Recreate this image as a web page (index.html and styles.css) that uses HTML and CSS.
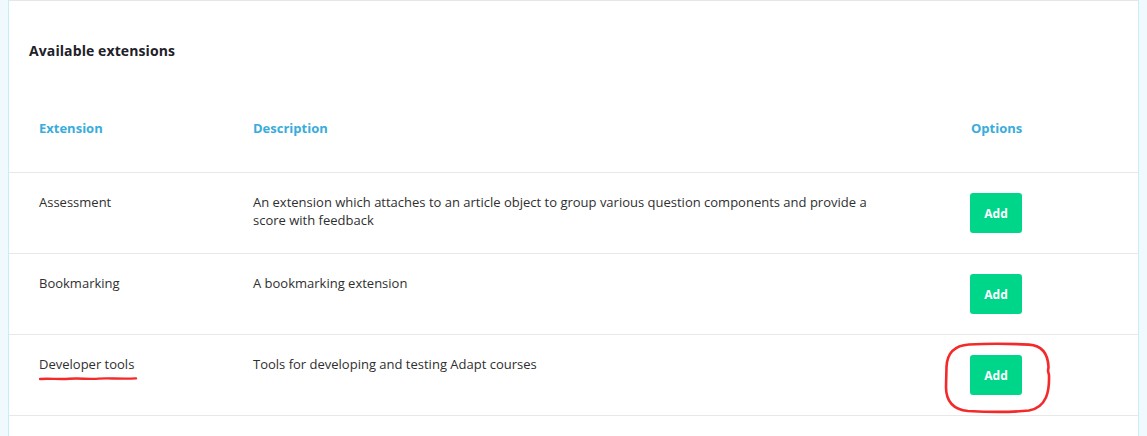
FILE: index.html
```html
<!DOCTYPE html>
<html lang="en">
<head>
<meta charset="utf-8">
<title>Available extensions</title>
<link rel="stylesheet" href="styles.css">
</head>
<body>
<div class="panel">
  <h2 class="title">Available extensions</h2>
  <div class="table">
    <div class="row head">
      <div class="c1">Extension</div>
      <div class="c2">Description</div>
      <div class="c3">Options</div>
    </div>
    <div class="row">
      <div class="c1">Assessment</div>
      <div class="c2"><p class="desc">An extension which attaches to an article object to group various question components and provide a score with feedback</p></div>
      <div class="c3"><button class="add">Add</button></div>
    </div>
    <div class="row">
      <div class="c1">Bookmarking</div>
      <div class="c2"><p class="desc">A bookmarking extension</p></div>
      <div class="c3"><button class="add">Add</button></div>
    </div>
    <div class="row">
      <div class="c1">Developer tools</div>
      <div class="c2"><p class="desc">Tools for developing and testing Adapt courses</p></div>
      <div class="c3"><button class="add">Add</button></div>
    </div>
  </div>
  <svg class="mark-underline" width="100" height="8" viewBox="0 0 100 8">
    <path d="M1 4 C10 3.2, 20 4.6, 30 3.8 S50 4.4, 60 3.6 S80 4.3, 97 3.4" />
  </svg>
  <svg class="mark-circle" width="110" height="74" viewBox="0 0 110 74">
    <path d="M26 3.5 C45 2.5, 70 2.8, 86 3.6 C98 4.5, 105 12, 105.5 26 L105 30 L106 34 C106.5 50, 104 66, 86 69.5 C66 71.5, 44 71, 25 70 C10 68.5, 3 60, 3 46 L3.5 26 C4 12, 11 4.5, 26 3.5 Z" />
  </svg>
</div>
</body>
</html>
```

FILE: styles.css
```css
* { box-sizing: border-box; }
html, body { margin: 0; padding: 0; }
body {
  background: #f0fafe;
  font-family: "Open Sans", "Noto Sans", "DejaVu Sans", sans-serif;
  color: #333;
  height: 436px;
  overflow: hidden;
}
.panel {
  position: relative;
  margin-left: 8px;
  width: 1131px;
  height: 436px;
  background: #fff;
  border-left: 1px solid #c8ecf8;
  border-right: 1px solid #c8ecf8;
  border-top: 1px solid #e6e6e6;
}
.title {
  margin: 0;
  padding: 40px 0 0 20px;
  font-size: 14px;
  line-height: 20px;
  font-weight: 700;
  letter-spacing: 0.1px;
  color: #1e2128;
}
.row {
  display: grid;
  grid-template-columns: 214px 717px 1fr;
  padding: 20px 0 20px 30px;
  border-bottom: 1px solid #e8e8e8;
  height: 81px;
  font-size: 13px;
  line-height: 18px;
}
.row.head {
  height: auto;
  padding-top: 58px;
  padding-bottom: 35px;
  font-weight: 700;
  color: #39acdb;
}
.head .c3 { padding-left: 1px; }
.desc {
  margin: 0;
  max-width: 630px;
  color: #2f2f2f;
}
.c1 { color: #2f2f2f; }
.head .c1 { color: #39acdb; }
.add {
  display: block;
  width: 52px;
  height: 40px;
  border: none;
  border-radius: 3px;
  background: #00d68a;
  color: #fff;
  font-family: "Open Sans", "Noto Sans", sans-serif;
  font-weight: 700;
  font-size: 12px;
  padding: 0;
  cursor: pointer;
}
.mark-underline {
  position: absolute;
  left: 30px;
  top: 374px;
}
.mark-underline path {
  fill: none;
  stroke: #f42a2a;
  stroke-width: 2.4;
  stroke-linecap: round;
}
.mark-circle {
  position: absolute;
  left: 934px;
  top: 340px;
}
.mark-circle path {
  fill: none;
  stroke: #f42a2a;
  stroke-width: 2.6;
  stroke-linejoin: round;
}
```
